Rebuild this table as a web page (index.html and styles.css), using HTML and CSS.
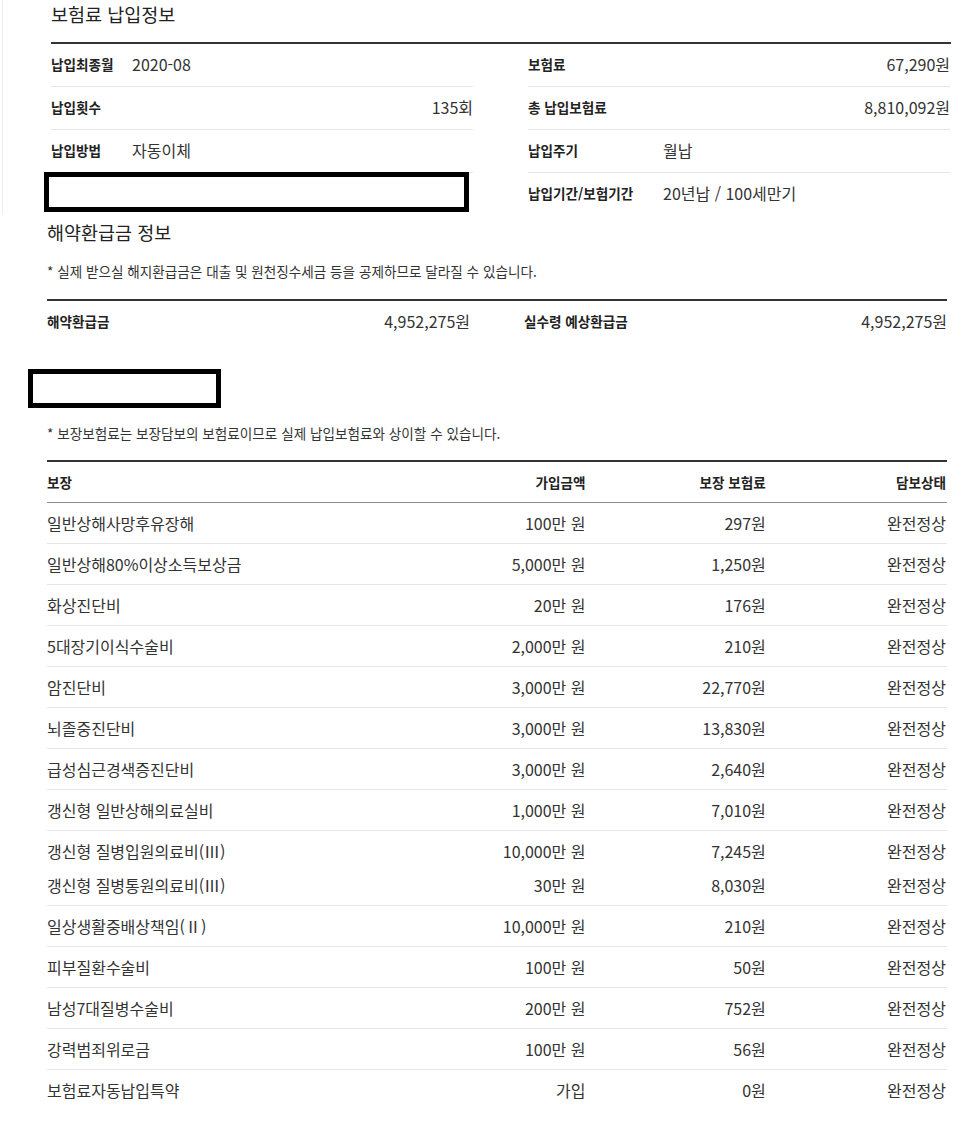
FILE: index.html
```html
<!DOCTYPE html>
<html lang="ko">
<head>
  <meta charset="UTF-8" />
  <meta name="viewport" content="width=device-width, initial-scale=1.0" />
  <title>보험료 납입정보</title>
  <link rel="stylesheet" href="styles.css">
</head>
<body>

  <!-- 보험료 납입정보 -->
  <section class="pay">
    <h3 class="sec-title">보험료 납입정보</h3>
    <div class="info-grid">
      <div class="info-col">
        <div class="info-row"><span class="info-label">납입최종월</span><span class="info-value">2020-08</span></div>
        <div class="info-row"><span class="info-label">납입횟수</span><span class="info-value right">135회</span></div>
        <div class="info-row"><span class="info-label">납입방법</span><span class="info-value">자동이체</span></div>
        <div class="redact redact-row"></div>
      </div>
      <div class="info-col wide-label">
        <div class="info-row"><span class="info-label">보험료</span><span class="info-value right">67,290원</span></div>
        <div class="info-row"><span class="info-label">총 납입보험료</span><span class="info-value right">8,810,092원</span></div>
        <div class="info-row"><span class="info-label">납입주기</span><span class="info-value">월납</span></div>
        <div class="info-row"><span class="info-label">납입기간/보험기간</span><span class="info-value">20년납 / 100세만기</span></div>
      </div>
    </div>
  </section>

  <!-- 해약환급금 정보 -->
  <section class="refund">
    <h3 class="sec-title">해약환급금 정보</h3>
    <p class="note">* 실제 받으실 해지환급금은 대출 및 원천징수세금 등을 공제하므로 달라질 수 있습니다.</p>
    <div class="info-grid refund-grid">
      <div class="info-col">
        <div class="info-row"><span class="info-label">해약환급금</span><span class="info-value right">4,952,275원</span></div>
      </div>
      <div class="info-col">
        <div class="info-row"><span class="info-label">실수령 예상환급금</span><span class="info-value right">4,952,275원</span></div>
      </div>
    </div>

    <div class="redact redact-title"></div>
    <p class="note note-cover">* 보장보험료는 보장담보의 보험료이므로 실제 납입보험료와 상이할 수 있습니다.</p>

    <!-- 보장 내역 -->
    <table class="cover">
      <thead>
        <tr>
          <th class="name">보장</th>
          <th>가입금액</th>
          <th>보장 보험료</th>
          <th>담보상태</th>
        </tr>
      </thead>
      <tbody>
        <tr><td class="name">일반상해사망후유장해</td><td>100만 원</td><td>297원</td><td>완전정상</td></tr>
        <tr><td class="name">일반상해80%이상소득보상금</td><td>5,000만 원</td><td>1,250원</td><td>완전정상</td></tr>
        <tr><td class="name">화상진단비</td><td>20만 원</td><td>176원</td><td>완전정상</td></tr>
        <tr><td class="name">5대장기이식수술비</td><td>2,000만 원</td><td>210원</td><td>완전정상</td></tr>
        <tr><td class="name">암진단비</td><td>3,000만 원</td><td>22,770원</td><td>완전정상</td></tr>
        <tr><td class="name">뇌졸중진단비</td><td>3,000만 원</td><td>13,830원</td><td>완전정상</td></tr>
        <tr><td class="name">급성심근경색증진단비</td><td>3,000만 원</td><td>2,640원</td><td>완전정상</td></tr>
        <tr><td class="name">갱신형 일반상해의료실비</td><td>1,000만 원</td><td>7,010원</td><td>완전정상</td></tr>
        <tr class="pair-top"><td class="name">갱신형 질병입원의료비(Ⅲ)</td><td>10,000만 원</td><td>7,245원</td><td>완전정상</td></tr>
        <tr><td class="name">갱신형 질병통원의료비(Ⅲ)</td><td>30만 원</td><td>8,030원</td><td>완전정상</td></tr>
        <tr><td class="name">일상생활중배상책임(Ⅱ)</td><td>10,000만 원</td><td>210원</td><td>완전정상</td></tr>
        <tr><td class="name">피부질환수술비</td><td>100만 원</td><td>50원</td><td>완전정상</td></tr>
        <tr><td class="name">남성7대질병수술비</td><td>200만 원</td><td>752원</td><td>완전정상</td></tr>
        <tr><td class="name">강력범죄위로금</td><td>100만 원</td><td>56원</td><td>완전정상</td></tr>
        <tr><td class="name">보험료자동납입특약</td><td>가입</td><td>0원</td><td>완전정상</td></tr>
      </tbody>
    </table>
  </section>

</body>
</html>
```

FILE: styles.css
```css
/* 기본 */
body {
  margin: 0;
  font-family: "Noto Sans CJK KR", "Noto Sans", sans-serif;
  color: #333;
  background: #fff;
}

.sec-title {
  margin: 0;
  font-size: 18.5px;
  font-weight: 400;
  line-height: 24px;
  color: #222;
}

/* 보험료 납입정보 */
.pay {
  width: 900px;
  margin-left: 2px;
  padding: 2px 0 0 48px;
  border-left: 1px solid #ececec;
}

.pay .sec-title {
  margin-bottom: 16px;
}

.info-grid {
  display: flex;
  gap: 55px;
  border-top: 2px solid #333;
}

.info-col {
  width: 422px;
}

.info-row {
  display: flex;
  align-items: center;
  height: 40px;
  padding-bottom: 2px;
  border-bottom: 1px solid #e6e6e6;
}

.info-row:last-child {
  border-bottom: 0;
}

.info-label {
  flex: none;
  width: 81px;
  font-size: 13.6px;
  font-weight: 700;
  color: #222;
}

.wide-label .info-label {
  width: 135px;
}

.info-value {
  font-size: 16px;
}

.info-value.right {
  margin-left: auto;
}

/* 가림 박스 */
.redact {
  box-sizing: border-box;
  border: 5px solid #000;
  background: #fff;
}

.redact-row {
  width: 425px;
  height: 40px;
  margin: -1px 0 0 -7px;
}

.redact-title {
  width: 193px;
  height: 39px;
  margin: 26px 0 0 -19px;
}

/* 해약환급금 정보 */
.refund {
  width: 900px;
  padding-left: 47px;
  margin-top: 5px;
}

.note {
  margin: 18px 0 19px;
  font-size: 13.6px;
  line-height: 18px;
}

.note-cover {
  margin-top: 16px;
  margin-bottom: 18px;
}

.refund-grid {
  gap: 54px;
}

.refund-grid .info-col {
  width: 423px;
}

.refund-grid .info-label {
  width: auto;
}

/* 보장 테이블 */
.cover {
  width: 900px;
  border-collapse: separate;
  border-spacing: 0;
  border-top: 2px solid #333;
}

.cover th,
.cover td {
  width: 180px;
  padding: 10px 1px 10px 0;
  line-height: 20px;
  text-align: right;
  border-bottom: 1px solid #e6e6e6;
}

.cover th {
  font-size: 13.6px;
  font-weight: 700;
  color: #222;
  border-bottom-color: #8c8c8c;
}

.cover td {
  font-size: 16px;
}

.cover .name {
  width: 360px;
  text-align: left;
}

.cover .pair-top td {
  padding-bottom: 4px;
  border-bottom: 0;
}

.cover tbody tr:last-child td {
  border-bottom: 0;
}
```
